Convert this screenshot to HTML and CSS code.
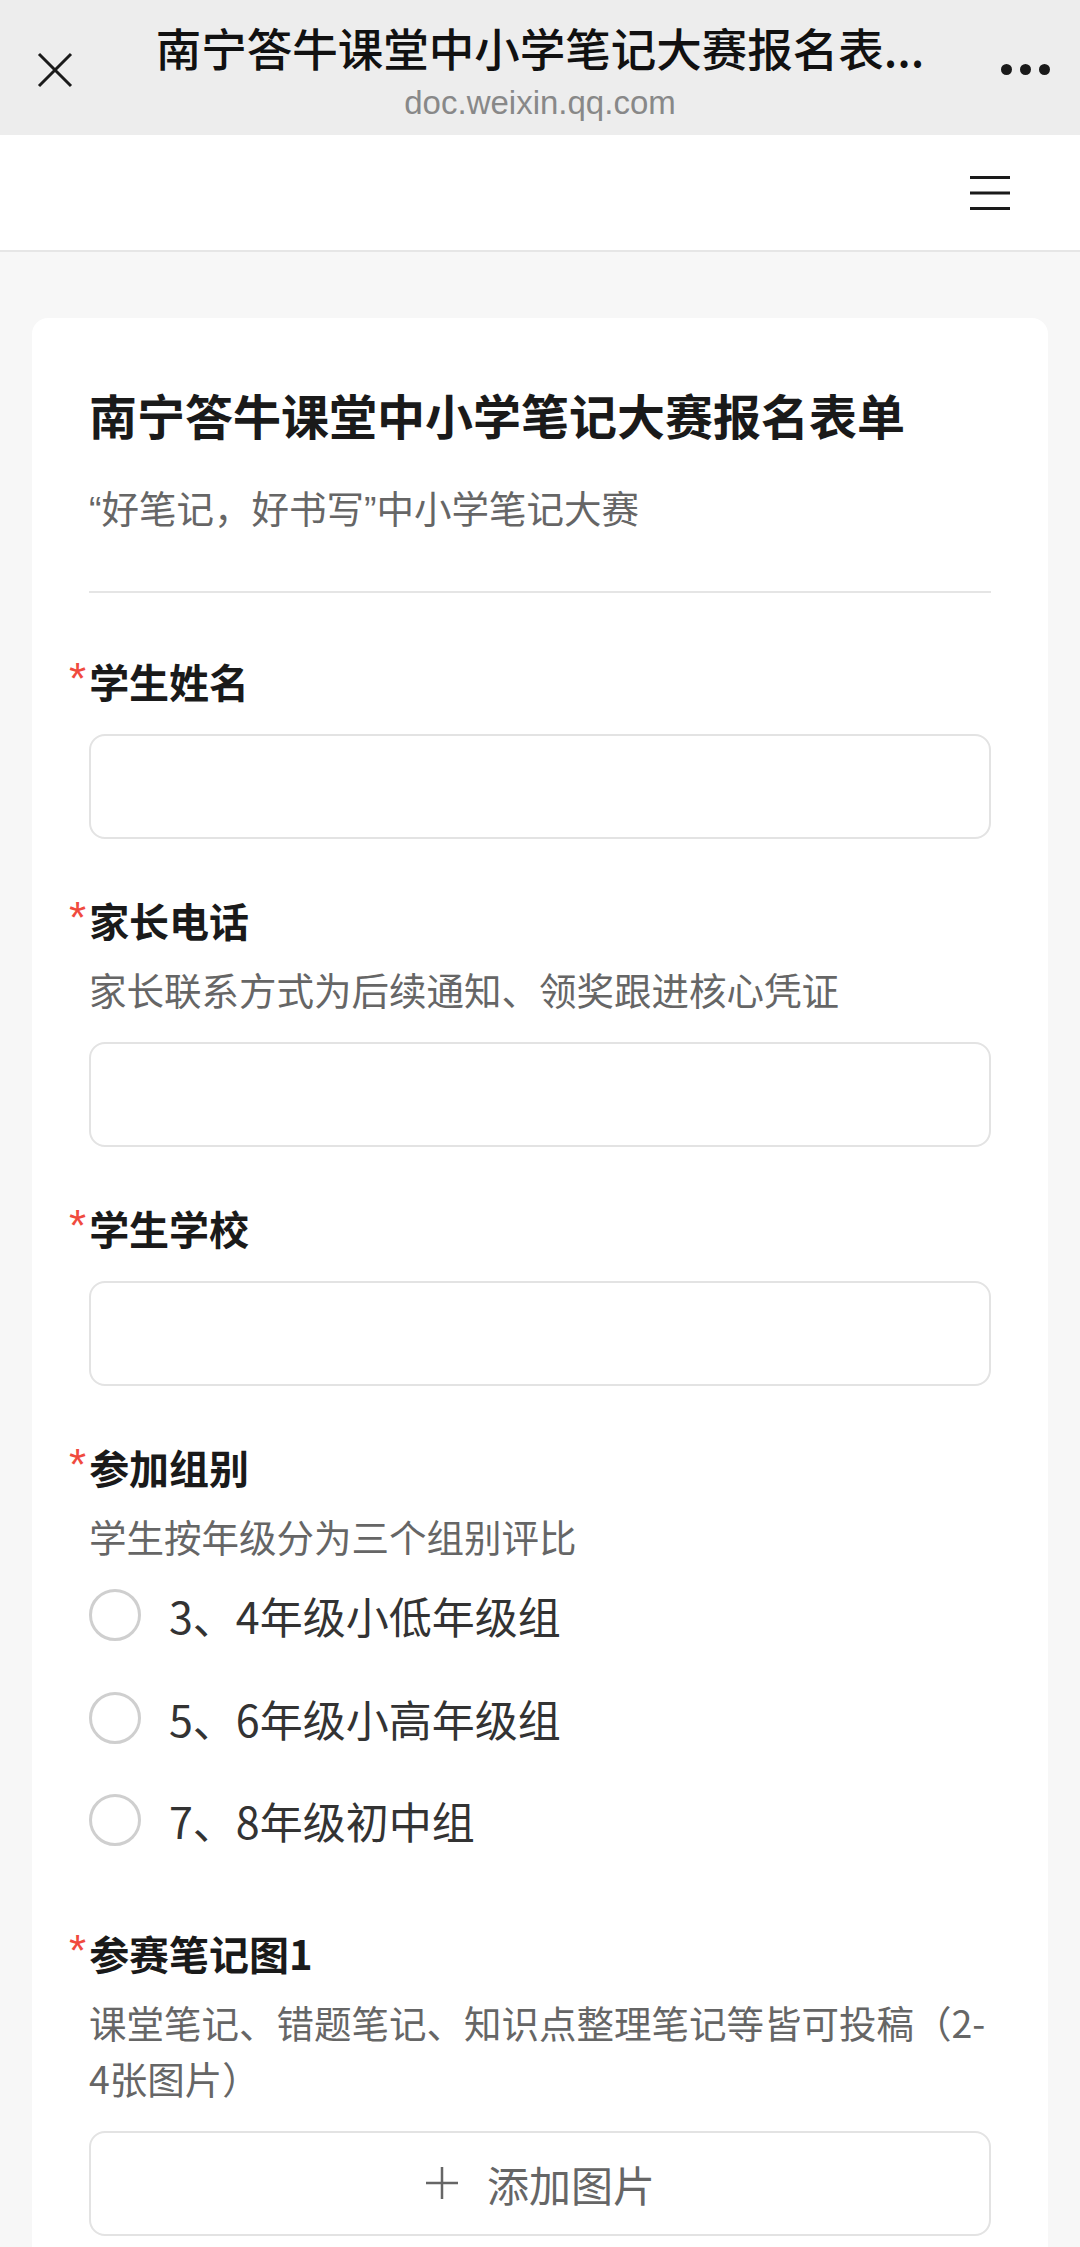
FILE: index.html
```html
<!DOCTYPE html>
<html lang="zh-CN">
<head>
    <meta charset="UTF-8">
    <meta name="viewport" content="width=device-width, initial-scale=1.0">
    <title>南宁答牛课堂中小学笔记大赛报名表单</title>
    <link rel="stylesheet" href="styles.css">
</head>
<body>

    <!-- wechat top bar -->
    <header class="topbar">
        <div class="topbar-btn">
            <svg width="36" height="36" viewBox="0 0 36 36">
                <path d="M2 2 L34 34 M34 2 L2 34" stroke="#1a1a1a" stroke-width="3" fill="none"/>
            </svg>
        </div>
        <div class="topbar-title">
            <div class="page-title">南宁答牛课堂中小学笔记大赛报名表...</div>
            <div class="page-url">doc.weixin.qq.com</div>
        </div>
        <div class="topbar-btn more">
            <span class="dot"></span><span class="dot"></span><span class="dot"></span>
        </div>
    </header>

    <div class="toolbar">
        <svg width="40" height="40" viewBox="0 0 40 40">
            <path d="M0 4.5 H40 M0 20 H40 M0 35.5 H40" stroke="#1a1a1a" stroke-width="3" fill="none"/>
        </svg>
    </div>

    <main class="page">
        <div class="card">
            <h1 class="form-title">南宁答牛课堂中小学笔记大赛报名表单</h1>
            <p class="form-sub"><span class="q">“</span>好笔记，好书写<span class="q">”</span>中小学笔记大赛</p>
            <div class="divider"></div>

            <div class="field">
                <div class="label"><span class="req">*</span>学生姓名</div>
                <div class="input"></div>
            </div>

            <div class="field">
                <div class="label"><span class="req">*</span>家长电话</div>
                <div class="desc">家长联系方式为后续通知、领奖跟进核心凭证</div>
                <div class="input"></div>
            </div>

            <div class="field">
                <div class="label"><span class="req">*</span>学生学校</div>
                <div class="input"></div>
            </div>

            <div class="field">
                <div class="label"><span class="req">*</span>参加组别</div>
                <div class="desc">学生按年级分为三个组别评比</div>
                <div class="options">
                    <div class="option"><span class="radio"></span>3、4年级小低年级组</div>
                    <div class="option"><span class="radio"></span>5、6年级小高年级组</div>
                    <div class="option"><span class="radio"></span>7、8年级初中组</div>
                </div>
            </div>

            <div class="field">
                <div class="label"><span class="req">*</span>参赛笔记图1</div>
                <div class="desc">课堂笔记、错题笔记、知识点整理笔记等皆可投稿（2-4张图片）</div>
                <div class="input upload">
                    <svg width="34" height="34" viewBox="0 0 34 34">
                        <path d="M17 1 V33 M1 17 H33" stroke="#666" stroke-width="2.5" fill="none"/>
                    </svg>
                    <span>添加图片</span>
                </div>
            </div>
        </div>
    </main>

</body>
</html>
```

FILE: styles.css
```css
* {
    box-sizing: border-box;
}

body {
    margin: 0;
    background: #f7f7f7;
    font-family: "Noto Sans CJK SC", "Noto Sans", sans-serif;
    color: #1a1a1a;
}

/* top bar */
.topbar {
    height: 135px;
    background: #ededed;
    display: flex;
    align-items: center;
}

.topbar-btn {
    width: 110px;
    display: flex;
    justify-content: center;
    align-items: center;
    padding-top: 4px;
}

.topbar-title {
    flex: 1;
    text-align: center;
    padding-top: 6px;
}

.page-title {
    font-size: 45.5px;
    font-weight: 500;
    line-height: 56px;
    color: #111;
}

.page-url {
    font-family: "Liberation Sans", "Noto Sans", sans-serif;
    font-size: 33px;
    line-height: 40px;
    margin-top: 8px;
    color: #888;
}

.more {
    gap: 8px;
}

.dot {
    width: 11px;
    height: 11px;
    border-radius: 50%;
    background: #1a1a1a;
}

.toolbar {
    height: 117px;
    background: #fff;
    border-bottom: 2px solid #e6e6e6;
    display: flex;
    justify-content: flex-end;
    align-items: center;
    padding-right: 70px;
}

/* form card */
.page {
    padding: 66px 32px 0;
}

.card {
    background: #fff;
    border-radius: 16px;
    padding: 62px 57px 40px;
    min-height: 1940px;
}

.form-title {
    margin: 0;
    font-size: 48px;
    line-height: 68px;
    font-weight: 700;
    color: #1a1a1a;
}

.form-sub {
    margin: 31px 0 0;
    font-size: 37.5px;
    line-height: 56px;
    color: #666;
}

.form-sub .q {
    font-family: "Liberation Sans", sans-serif;
    line-height: 0;
}

.divider {
    height: 2px;
    background: #e5e5e5;
    margin-top: 56px;
}

.field {
    padding-top: 53px;
}

.divider + .field {
    padding-top: 60px;
}

.label {
    font-size: 40px;
    line-height: 56px;
    font-weight: 700;
    color: #1a1a1a;
}

.req {
    font-family: "Liberation Sans", sans-serif;
    color: #f04a3e;
    font-weight: 400;
    font-size: 44px;
    line-height: 0;
    margin-left: -20px;
    margin-right: 3px;
    vertical-align: 4px;
}

.desc {
    margin-top: 13px;
    font-size: 37.5px;
    line-height: 56px;
    color: #666;
}

.input {
    margin-top: 25px;
    height: 105px;
    border: 2px solid #e3e3e3;
    border-radius: 16px;
    background: #fff;
}

.upload {
    display: flex;
    justify-content: center;
    align-items: center;
    gap: 28px;
    font-size: 42px;
    color: #666;
}

.options {
    display: flex;
    flex-direction: column;
}

.option {
    height: 102.5px;
    display: flex;
    align-items: center;
    gap: 28px;
    font-size: 43px;
    color: #333;
}

.radio {
    width: 52px;
    height: 52px;
    border: 3px solid #cfcfcf;
    border-radius: 50%;
    flex-shrink: 0;
}
```
